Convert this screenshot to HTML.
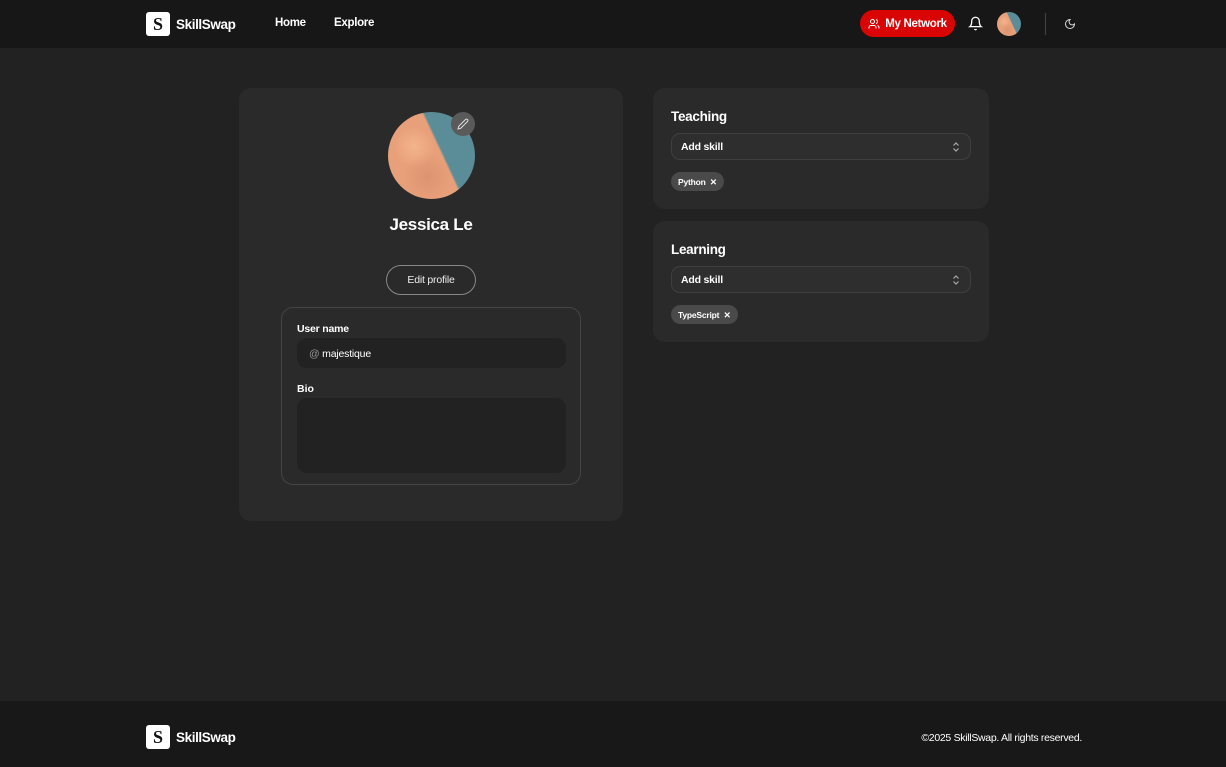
<!DOCTYPE html>
<html><head><meta charset="utf-8"><style>
*{box-sizing:border-box;margin:0;padding:0}
body{width:1226px;height:767px;background:#222;font-family:"Liberation Sans",sans-serif;color:#fff;position:relative;overflow:hidden}
.hdr{position:absolute;left:0;top:0;width:1226px;height:48px;background:#171717}
.logo{position:absolute;display:flex;align-items:center;gap:6px;font-weight:bold;font-size:13.5px;letter-spacing:-0.4px}
.lb{width:24px;height:24px;background:#fff;border-radius:3px;color:#111;font-family:"Liberation Serif",serif;font-weight:bold;font-size:18px;display:flex;align-items:center;justify-content:center;letter-spacing:0}
.nav{position:absolute;top:17px;font-size:11.5px;font-weight:bold;letter-spacing:-0.3px}
.btn{position:absolute;left:860px;top:10px;width:95px;height:27px;border-radius:14px;background:#d90404;font-size:11.5px;letter-spacing:-0.3px;font-weight:bold;display:flex;align-items:center;justify-content:center;gap:5px}
.av{border-radius:50%;background:radial-gradient(circle at 30% 40%,rgba(255,200,160,.5) 0,transparent 25%),radial-gradient(circle at 45% 75%,rgba(200,130,100,.4) 0,transparent 30%),linear-gradient(65deg,#e8a07a 58%,#5b8d98 60%)}
.card{position:absolute;background:#2a2a2a;border-radius:12px}
.inp{background:#222;border-radius:10px;position:absolute}
.sel{position:absolute;left:18px;width:300px;height:27px;border:1px solid #3f3f3f;border-radius:9px;background:#2e2e2e;font-size:10.5px;letter-spacing:-0.2px;font-weight:bold;padding:7px 9px}
.sel svg{position:absolute;right:10px;top:7px}
.tag{position:absolute;left:18px;height:19px;border-radius:10px;background:#4a4a4a;font-size:8.5px;font-weight:bold;padding:5px 7px;letter-spacing:-0.2px}
h3{position:absolute;left:18px;font-size:13.5px;letter-spacing:-0.3px}
.ftr{position:absolute;left:0;top:701px;width:1226px;height:66px;background:#181818}
</style></head><body>
<div class="hdr">
<div class="logo" style="left:146px;top:12px"><div class="lb">S</div>SkillSwap</div>
<div class="nav" style="left:275px">Home</div>
<div class="nav" style="left:334px">Explore</div>
<div class="btn"><svg width="12" height="12" viewBox="0 0 24 24" fill="none" stroke="#fff" stroke-width="2"><circle cx="9" cy="7" r="4"/><path d="M2 21v-2a4 4 0 0 1 4-4h6a4 4 0 0 1 4 4v2M16 3.1a4 4 0 0 1 0 7.8M22 21v-2a4 4 0 0 0-3-3.9"/></svg>My Network</div>
<svg style="position:absolute;left:968px;top:16px" width="15" height="15" viewBox="0 0 24 24" fill="none" stroke="#fff" stroke-width="2"><path d="M6 8a6 6 0 0 1 12 0c0 7 3 9 3 9H3s3-2 3-9M10.3 21a2 2 0 0 0 3.4 0"/></svg>
<div class="av" style="position:absolute;left:997px;top:12px;width:24px;height:24px"></div>
<div style="position:absolute;left:1045px;top:13px;width:1px;height:22px;background:#444"></div>
<svg style="position:absolute;left:1064px;top:18px" width="12" height="12" viewBox="0 0 24 24" fill="none" stroke="#ddd" stroke-width="2"><path d="M12 3a6 6 0 0 0 9 9 9 9 0 1 1-9-9z"/></svg>
</div>

<div class="card" style="left:239px;top:88px;width:384px;height:433px">
<div class="av" style="position:absolute;left:149px;top:24px;width:87px;height:87px"></div>
<div style="position:absolute;left:212px;top:24px;width:24px;height:24px;border-radius:50%;background:#5a5a5a;display:flex;align-items:center;justify-content:center"><svg width="12" height="12" viewBox="0 0 24 24" fill="none" stroke="#ddd" stroke-width="2"><path d="M17 3a2.8 2.8 0 0 1 4 4L7.5 20.5 2 22l1.5-5.5z"/></svg></div>
<div style="position:absolute;left:0;width:384px;top:127px;text-align:center;font-size:17px;font-weight:bold;letter-spacing:-0.3px">Jessica Le</div>
<div style="position:absolute;left:147px;top:177px;width:90px;height:30px;border:1px solid #888;border-radius:15px;font-size:10.5px;text-align:center;line-height:28px;color:#eee;letter-spacing:-0.2px">Edit profile</div>
<div style="position:absolute;left:42px;top:219px;width:300px;height:178px;border:1px solid #444;border-radius:12px">
<div style="position:absolute;left:15px;top:15px;font-size:10.5px;font-weight:bold;letter-spacing:-0.2px">User name</div>
<div class="inp" style="left:15px;top:30px;width:269px;height:30px;font-size:10.5px;padding:10px 12px;letter-spacing:-0.2px"><span style="color:#999">@</span> majestique</div>
<div style="position:absolute;left:15px;top:75px;font-size:10.5px;font-weight:bold">Bio</div>
<div class="inp" style="left:15px;top:90px;width:269px;height:75px"></div>
</div>
</div>

<div class="card" style="left:653px;top:88px;width:336px;height:121px">
<h3 style="top:21px">Teaching</h3>
<div class="sel" style="top:45px">Add skill<svg width="8" height="12" viewBox="0 0 8 12" fill="none" stroke="#aaa" stroke-width="1.2"><path d="M1.5 4.5 4 2l2.5 2.5M1.5 7.5 4 10l2.5-2.5"/></svg></div>
<div class="tag" style="top:84px">Python &nbsp;✕</div>
</div>
<div class="card" style="left:653px;top:221px;width:336px;height:121px">
<h3 style="top:21px">Learning</h3>
<div class="sel" style="top:45px">Add skill<svg width="8" height="12" viewBox="0 0 8 12" fill="none" stroke="#aaa" stroke-width="1.2"><path d="M1.5 4.5 4 2l2.5 2.5M1.5 7.5 4 10l2.5-2.5"/></svg></div>
<div class="tag" style="top:84px">TypeScript &nbsp;✕</div>
</div>

<div class="ftr">
<div class="logo" style="left:146px;top:24px"><div class="lb">S</div>SkillSwap</div>
<div style="position:absolute;right:144px;top:31px;font-size:10.5px;letter-spacing:-0.3px">©2025 SkillSwap. All rights reserved.</div>
</div>
</body></html>
